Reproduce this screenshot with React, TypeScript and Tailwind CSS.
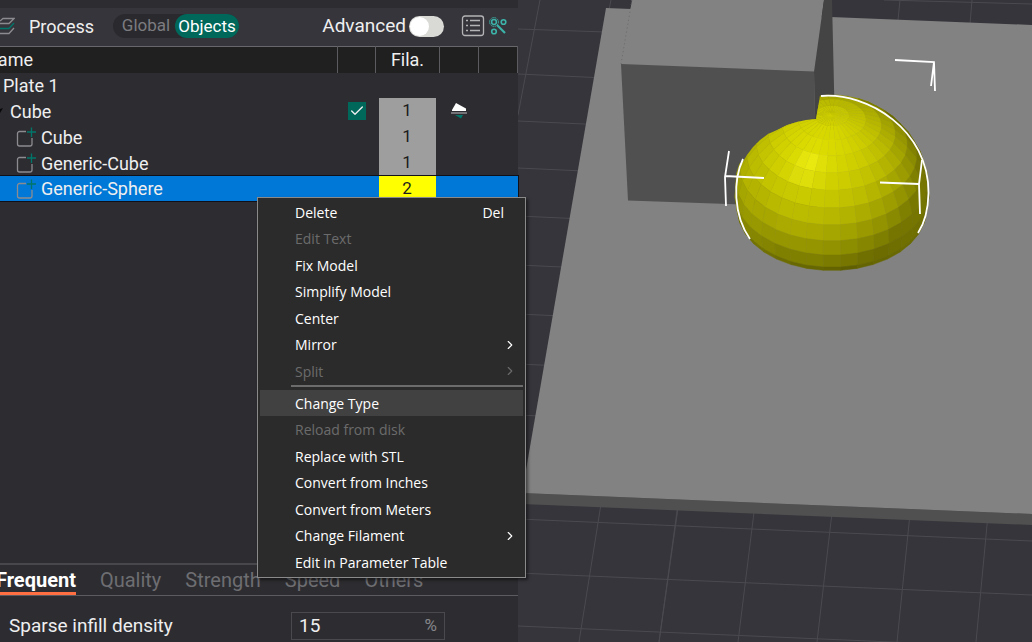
import { Check, ChevronRight } from "lucide-react";

type MenuEntry = {
  label: string;
  shortcut?: string;
  disabled?: boolean;
  submenu?: boolean;
  active?: boolean;
};

const editActions: MenuEntry[] = [
  { label: "Delete", shortcut: "Del" },
  { label: "Edit Text", disabled: true },
  { label: "Fix Model" },
  { label: "Simplify Model" },
  { label: "Center" },
  { label: "Mirror", submenu: true },
  { label: "Split", disabled: true, submenu: true },
];

const partActions: MenuEntry[] = [
  { label: "Change Type", active: true },
  { label: "Reload from disk", disabled: true },
  { label: "Replace with STL" },
  { label: "Convert from Inches" },
  { label: "Convert from Meters" },
  { label: "Change Filament", submenu: true },
  { label: "Edit in Parameter Table" },
];

const parts = [
  { name: "Cube", filament: 1 },
  { name: "Generic-Cube", filament: 1 },
  { name: "Generic-Sphere", filament: 2 },
];

const tabs = ["Frequent", "Quality", "Strength", "Speed", "Others"];

// Grid lines of the print bed: x1, y1, x2, y2
const bedLines = [
  [518, 29, 606, 32],
  [518, 74, 606, 78],
  [518, 121, 606, 125],
  [518, 168, 606, 172],
  [518, 216, 606, 220],
  [518, 265, 606, 269],
  [518, 314, 606, 318],
  [518, 364, 606, 368],
  [518, 415, 606, 419],
  [518, 519, 1032, 541],
  [518, 573, 1032, 595],
  [518, 626, 1032, 648],
  [884, 0, 1032, 4],
  [900, 0, 898, 20],
  [972, 0, 970, 24],
  [540, 0, 518, 115],
  [611, 0, 609, 10],
  [601, 504, 579, 642],
  [678, 504, 659, 642],
  [678, 508, 659, 642],
  [755, 504, 738, 642],
  [833, 504, 817, 642],
  [911, 504, 897, 642],
  [989, 504, 976, 642],
];

type Vec = [number, number, number];

const CENTER_X = 832;
const CENTER_Y = 192;
const RADIUS = 97;
const TILT = (39 * Math.PI) / 180;
const CAMERA = 2200;
const STEP = 10;
const CUT = 103;

const dot = (a: Vec, b: Vec) => a[0] * b[0] + a[1] * b[1] + a[2] * b[2];

// Unit vector in eye space (y up, z towards the camera)
function direction(colat: number, lon: number): Vec {
  const t = (colat * Math.PI) / 180;
  const p = (lon * Math.PI) / 180;
  const up = Math.cos(t);
  const front = Math.sin(t) * Math.cos(p);
  return [
    Math.sin(t) * Math.sin(p),
    up * Math.cos(TILT) - front * Math.sin(TILT),
    up * Math.sin(TILT) + front * Math.cos(TILT),
  ];
}

function project(v: Vec) {
  const scale = RADIUS / (1 - (v[2] * RADIUS) / CAMERA);
  return `${(CENTER_X + v[0] * scale).toFixed(1)},${(CENTER_Y - v[1] * scale).toFixed(1)}`;
}

function shade(n: Vec) {
  const top: Vec = [-0.457, 0.457, 0.762];
  const front: Vec = [0.699, 0.14, 0.699];
  const d = dot(n, top);
  const reflected = 2 * d * n[2] - top[2];
  const specular = 0.075 * Math.pow(Math.max(reflected, 0), 20);
  const light = 0.3 + 0.48 * Math.max(d, 0) + 0.18 * Math.max(dot(n, front), 0);
  const yellow = Math.round(Math.min(light + specular, 1) * 255);
  return `rgb(${yellow},${yellow},${Math.round(specular * 255)})`;
}

function sphereFacets() {
  const facets: { points: string; fill: string }[] = [];
  for (let colat = 0; colat < CUT; colat += STEP) {
    const end = Math.min(colat + STEP, CUT);
    for (let lon = -175; lon < 185; lon += STEP) {
      const normal = direction(colat + STEP / 2, lon + STEP / 2);
      if (normal[2] < -0.06) continue;
      facets.push({
        points: [
          direction(colat, lon),
          direction(colat, lon + STEP),
          direction(end, lon + STEP),
          direction(end, lon),
        ]
          .map(project)
          .join(" "),
        fill: shade(normal),
      });
    }
  }
  return facets;
}

const facets = sphereFacets();

function Viewport() {
  return (
    <svg
      viewBox="518 0 514 642"
      preserveAspectRatio="xMinYMin slice"
      className="absolute inset-0 h-full w-full"
      role="img"
      aria-label="3D view of the plate"
    >
      <defs>
        <clipPath id="outsideCube">
          <path d="M821 90H940V280H730V166L742 163L747 155L753 147L760 140L768 134L777 130L787 125L797 122L806 120L816 119Z" />
        </clipPath>
      </defs>
      <g stroke="#4a4a50" strokeWidth="1">
        {bedLines.map(([x1, y1, x2, y2], i) => (
          <line key={i} x1={x1} y1={y1} x2={x2} y2={y2} />
        ))}
      </g>
      <path d="M522 493L1032 514V525L522 504Z" fill="#505050" />
      <path d="M606 8L1032 25V514L522 493Z" fill="#828282" />
      <path d="M632 0H824L814 72L621 64Z" fill="#828282" />
      <path d="M632 0L621 64" stroke="#6a6a6a" strokeDasharray="1 3" />
      <path d="M824 0H832L835 130H815L814 72Z" fill="#444444" />
      <path d="M621 64L814 71.5L817 207L628 200.5Z" fill="#505050" />
      <g clipPath="url(#outsideCube)">
        {facets.map((facet, i) => (
          <polygon key={i} points={facet.points} fill={facet.fill} stroke={facet.fill} strokeWidth="0.5" />
        ))}
      </g>
      <g fill="none" stroke="#ffffff" strokeWidth="1.8">
        <path d="M821 96C868 92 929 130 928.500 193Q928 218 918 233" />
        <path d="M743 159C733 180 733 215 750 239" />
        <path d="M895 60L934 62L935 91M934 62L931 86" />
        <path d="M729 151L725 177L726 206M725 176L764 178" />
        <path d="M922 160L919 184L920 214M919 184L880 182.5" />
      </g>
    </svg>
  );
}

function LayersIcon() {
  return (
    <svg width="15" height="20" viewBox="0 0 15 20" fill="none" strokeWidth="1.3" aria-hidden="true">
      <path d="M0 7.500H9L14 2.500H3L0 5" stroke="#8c8c90" />
      <path d="M0 12.500H9L14 7" stroke="#00766a" />
      <path d="M0 17.500H9L14 12" stroke="#8c8c90" />
    </svg>
  );
}

function ListIcon() {
  return (
    <svg width="24" height="22" viewBox="0 0 24 22" fill="none" stroke="#b4b4b6" aria-hidden="true">
      <rect x="1.5" y="1" width="21" height="19.5" rx="2.5" strokeWidth="1.3" />
      <path d="M5 5.500H7M5 10.500H7M5 15.500H7M9 5.500H19M9 10.500H19M9 15.500H19" strokeWidth="1.3" />
    </svg>
  );
}

function NodesIcon() {
  return (
    <svg width="18" height="18" viewBox="0 0 18 18" fill="none" stroke="#3cb4aa" aria-hidden="true">
      <circle cx="5" cy="5" r="4.4" strokeWidth="1" strokeDasharray="1.5 0.8" />
      <circle cx="5" cy="5" r="2.4" strokeWidth="1.5" />
      <circle cx="14.5" cy="5" r="2.3" strokeWidth="1.6" />
      <circle cx="5" cy="14.5" r="2.3" strokeWidth="1.6" />
      <path d="M8 8L16 16" strokeWidth="2.2" />
    </svg>
  );
}

function PartIcon() {
  return (
    <svg width="20" height="20" viewBox="0 0 20 20" fill="none" strokeWidth="1.3" aria-hidden="true">
      <path d="M10 4.500H3.500A2 2 0 0 0 1.500 6.500V17A2 2 0 0 0 3.500 19H14A2 2 0 0 0 16 17V11" stroke="#8c8c90" />
      <path d="M15.500 0.500V10M11 5H20" stroke="#00766a" />
    </svg>
  );
}

function SupportIcon() {
  return (
    <svg width="18" height="18" viewBox="0 0 18 18" aria-hidden="true">
      <path d="M2 8L6 1L16 6.500V9H2Z" fill="#ffffff" />
      <path d="M1 11H17" stroke="#8c8c90" strokeWidth="1.5" />
      <path d="M5 13H13L11 16.500Z" fill="#00766a" />
    </svg>
  );
}

function MenuGroup({ entries }: { entries: MenuEntry[] }) {
  return (
    <>
      {entries.map((entry, i) => (
        <button
          key={entry.label}
          type="button"
          role="menuitem"
          disabled={entry.disabled}
          className={`flex w-full items-center pl-[35px] pr-1.5 text-left disabled:text-[#6b6b6b] ${
            i % 2 ? "h-[27px]" : "h-[26px]"
          } ${entry.active ? "bg-[#414141]" : ""}`}
        >
          <span className="flex-1">{entry.label}</span>
          {entry.shortcut && <span className="pr-[13px]">{entry.shortcut}</span>}
          {entry.submenu && <ChevronRight className="h-3.5 w-3.5" strokeWidth={2} />}
        </button>
      ))}
    </>
  );
}

function ContextMenu() {
  return (
    <div
      role="menu"
      className="absolute left-[257px] top-[197px] z-10 w-[269px] border border-[#8a8a8a] bg-[#2b2b2b] px-0.5 pb-0.5 pt-px font-['Open_Sans',sans-serif] text-[14px] text-white shadow-[2px_2px_3px_rgba(0,0,0,0.5)]"
    >
      <MenuGroup entries={editActions} />
      <div role="separator" className="mb-[3px] ml-[31px] mt-px h-[2px] bg-[#6c6c6c]" />
      <MenuGroup entries={partActions} />
    </div>
  );
}

function ProcessHeader() {
  return (
    <header className="mt-2 flex h-[38px] items-center bg-[#36353b] pb-0.5">
      <LayersIcon />
      <h1 className="ml-3.5 w-[84px] text-[18px]">Process</h1>
      <div className="flex h-6 items-center rounded-full bg-[#2a2a2e] text-[17px]">
        <button type="button" className="w-[62px] pl-1 text-[#7c7c80]">
          Global
        </button>
        <button type="button" className="h-6 w-16 rounded-full bg-[#00675b] text-white">
          Objects
        </button>
      </div>
      <label className="ml-auto flex items-center gap-[3px] text-[19px]">
        Advanced
        <input type="checkbox" role="switch" className="peer sr-only" />
        <span className="flex h-[21px] w-[35px] rounded-full bg-[#d9d9d6] p-px peer-checked:justify-end">
          <span className="h-[19px] w-[19px] rounded-full bg-white" />
        </span>
      </label>
      <button type="button" aria-label="Parameter list" className="ml-[17px]">
        <ListIcon />
      </button>
      <button type="button" aria-label="Compare presets" className="ml-1 mr-[11px]">
        <NodesIcon />
      </button>
    </header>
  );
}

function ObjectTable() {
  return (
    <table className="w-full table-fixed border-collapse text-[18px]">
      <colgroup>
        <col />
        <col className="w-[38px]" />
        <col className="w-16" />
        <col className="w-[39px]" />
        <col className="w-[39px]" />
      </colgroup>
      <thead>
        <tr className="h-[26px] border-t border-[#68686c] bg-[#202020] leading-[26px]">
          <th className="border-r border-[#5c5c60] text-left font-normal">
            <span className="-ml-[15px]">Name</span>
          </th>
          <th aria-label="Printable" className="border-r border-[#5c5c60]" />
          <th className="border-r border-[#5c5c60] font-normal">Fila.</th>
          <th aria-label="Support" className="border-r border-[#5c5c60]" />
          <th aria-label="Info" className="border-r border-[#5c5c60]" />
        </tr>
      </thead>
      <tbody className="leading-[25px]">
        <tr className="h-[25px]">
          <td className="pl-[3px]">Plate 1</td>
          <td />
          <td />
          <td />
          <td />
        </tr>
        <tr className="h-[26px]">
          <td>
            <div className="flex items-center gap-[7px]">
              <svg width="3" height="8" viewBox="0 0 3 8" aria-hidden="true">
                <path d="M0 2L3 1L0 6Z" fill="#08080a" />
              </svg>
              Cube
            </div>
          </td>
          <td>
            <label className="mx-auto flex h-[18px] w-[18px] items-center justify-center bg-[#00675b]">
              <input type="checkbox" defaultChecked aria-label="Printable" className="sr-only" />
              <Check className="h-4 w-4" strokeWidth={2} />
            </label>
          </td>
          <td className="pl-[3px] pr-1 text-center text-[17px] text-[#1c1c1c]">
            <div className="h-[26px] bg-[#9e9e9e]">1</div>
          </td>
          <td>
            <div className="flex justify-center">
              <SupportIcon />
            </div>
          </td>
          <td />
        </tr>
        {parts.map((part) => {
          const selected = part.filament === 2;
          return (
            <tr
              key={part.name}
              className={selected ? "h-[25px] bg-[#0078d7] outline-1 outline-[#101018]" : "h-[26px]"}
            >
              <td>
                <div className="flex items-center gap-[5px] pl-4">
                  <PartIcon />
                  <span>{part.name}</span>
                </div>
              </td>
              <td />
              <td className="pl-[3px] pr-1 text-center text-[17px] text-[#1c1c1c]">
                <div className={selected ? "h-[25px] bg-[#ffff00]" : "h-[26px] bg-[#9e9e9e]"}>{part.filament}</div>
              </td>
              <td />
              <td />
            </tr>
          );
        })}
      </tbody>
    </table>
  );
}

function ParameterPanel() {
  return (
    <section className="border-t-2 border-[#48484c]">
      <nav className="flex h-[31px] items-stretch gap-6 border-b border-[#5c5c60] text-[20px]">
        {tabs.map((tab, i) => (
          <button
            key={tab}
            type="button"
            className={i === 0 ? "-ml-1 border-b-[3px] border-[#ff6f42] font-bold text-white" : "text-[#6e6e72]"}
          >
            {tab}
          </button>
        ))}
      </nav>
      <div className="flex items-center pb-0.5 pl-[9px] pt-4">
        <label htmlFor="density" className="w-[282px] text-[19px]">
          Sparse infill density
        </label>
        <div className="flex h-7 w-[154px] items-center border border-[#4a4a4e] px-[7px]">
          <input id="density" defaultValue="15" className="w-full min-w-0 bg-transparent text-[19px] outline-none" />
          <span className="text-[17px] text-[#86868a]">%</span>
        </div>
      </div>
    </section>
  );
}

export default function App() {
  return (
    <div className="relative flex h-screen overflow-hidden bg-[#36353b] font-[Roboto,sans-serif] text-[#efeff0]">
      <aside className="flex w-[518px] shrink-0 flex-col bg-[#2d2d31]">
        <ProcessHeader />
        <div className="flex-1">
          <ObjectTable />
        </div>
        <ParameterPanel />
      </aside>
      <main className="relative flex-1">
        <Viewport />
      </main>
      <ContextMenu />
    </div>
  );
}
